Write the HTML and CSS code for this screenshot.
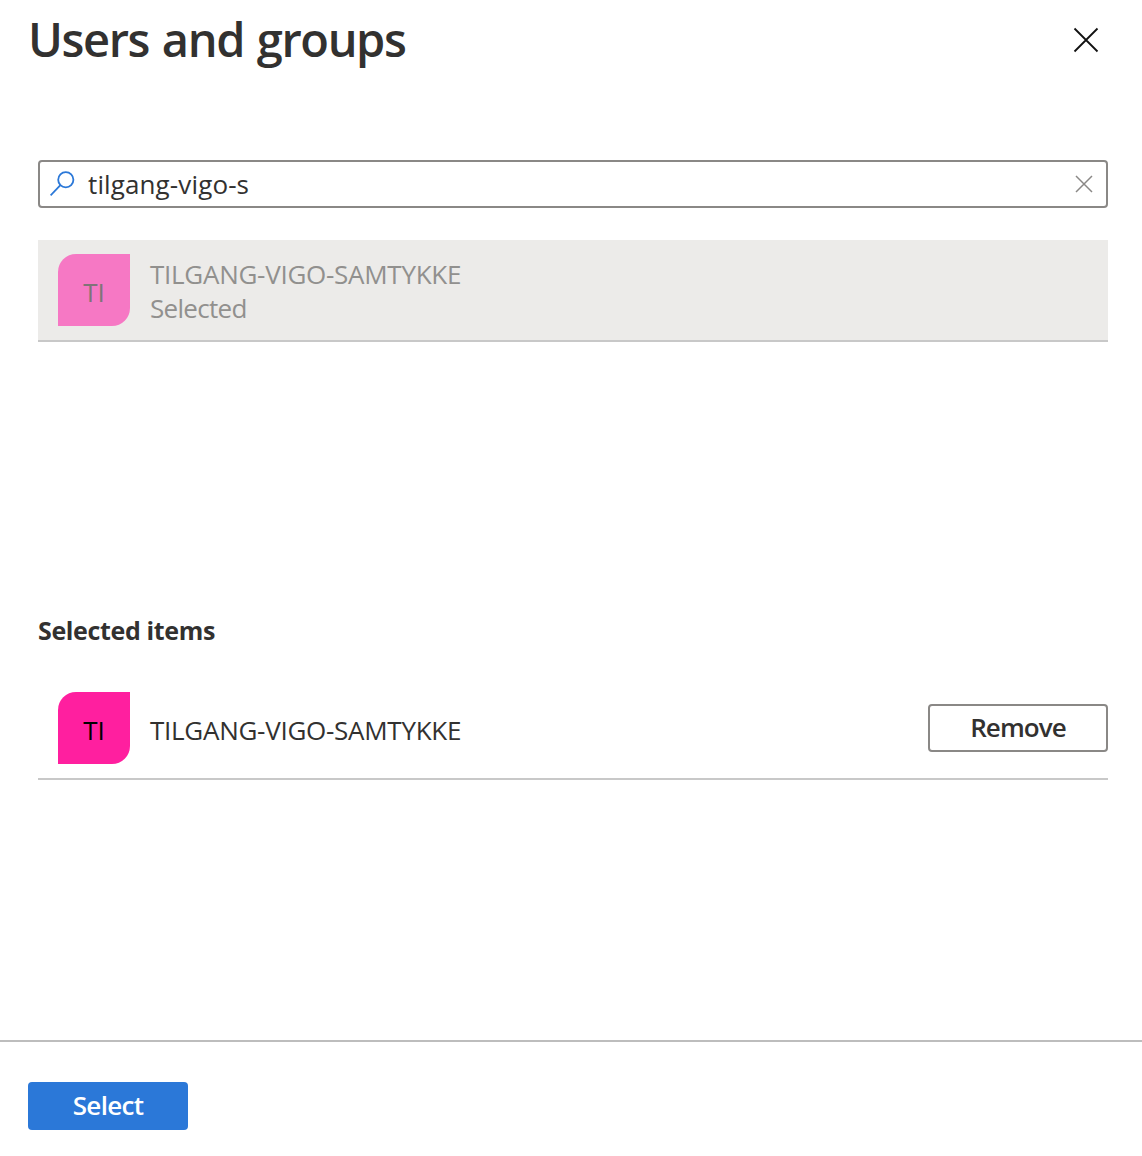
FILE: index.html
```html
<!DOCTYPE html>
<html lang="en">
<head>
<meta charset="utf-8">
<title>Users and groups</title>
<link rel="stylesheet" href="styles.css">
</head>
<body>
<main class="panel">
  <header class="header">
    <h1 class="title">Users and groups</h1>
    <button class="close" aria-label="Close"><svg width="26" height="26" viewBox="0 0 26 26"><path d="M1.5 1.5l23 23M24.5 1.5l-23 23"/></svg></button>
  </header>
  <div class="search">
    <svg class="lens" width="26" height="26" viewBox="0 0 26 26"><circle cx="15.8" cy="8.8" r="7.6"/><path d="M10.4 14.2L0.6 24.4"/></svg>
    <span class="query">tilgang-vigo-s</span>
    <svg class="clear" width="18" height="18" viewBox="0 0 18 18"><path d="M1 1l16 16M17 1L1 17"/></svg>
  </div>
  <div class="row result">
    <div class="avatar"><span>TI</span></div>
    <div class="info"><span class="name">TILGANG-VIGO-SAMTYKKE</span><span class="state">Selected</span></div>
  </div>
  <h2 class="subtitle">Selected items</h2>
  <div class="row chosen">
    <div class="avatar"><span>TI</span></div>
    <span class="name">TILGANG-VIGO-SAMTYKKE</span>
    <button class="remove">Remove</button>
  </div>
  <footer class="footer"><button class="select">Select</button></footer>
</main>
</body>
</html>
```
FILE: styles.css
```css
* { box-sizing: border-box; }
body { margin: 0; background: #fff; color: #323130; font: 26px/34px "Open Sans", "Noto Sans", sans-serif; }
button { font: inherit; padding: 0; margin: 0; color: inherit; }
svg { display: block; fill: none; flex: none; }
span { white-space: nowrap; }
.panel { height: 1156px; display: flex; flex-direction: column; }
.header { height: 80px; padding: 0 43px 0 28px; display: flex; justify-content: space-between; align-items: center; }
.title { margin: 0; font-size: 47px; font-weight: 650; line-height: 78px; height: 80px; letter-spacing: -1.4px; word-spacing: 2px; }
.close { border: 0; background: none; }
.close svg { stroke: #111; stroke-width: 1.8; }
.search { height: 48px; margin: 80px 34px 0 38px; border: 2px solid #8a8886; border-radius: 4px; display: flex; align-items: center; padding: 0 13px 0 10px; }
.lens { stroke: #2b78d8; stroke-width: 1.8; }
.query { margin-left: 12px; flex: 1; letter-spacing: 0.12px; }
.clear { stroke: #8a8886; stroke-width: 1.5; }
.row { margin: 0 34px 0 38px; display: flex; align-items: center; padding-left: 20px; height: 102px; border-bottom: 2px solid #c8c8c8; }
.result { margin-top: 32px; background: #ecebe9; color: #91908e; }
.avatar { width: 72px; height: 72px; margin-right: 20px; background: #ff1f9f; border-radius: 18px 0; display: flex; align-items: center; justify-content: center; color: #000; padding-top: 3px; }
.result .avatar { background: #f678c4; color: #7f7478; }
.info { display: flex; flex-direction: column; padding-top: 2px; }
.name { letter-spacing: -0.27px; }
.state { letter-spacing: -0.7px; }
.subtitle { margin: 271px 38px 0; height: 65px; font-size: 25px; line-height: 34px; font-weight: 700; letter-spacing: -0.35px; }
.chosen .name { flex: 1; padding-top: 4px; }
.remove { width: 180px; height: 48px; padding-bottom: 3px; border: 2px solid #8a8886; border-radius: 4px; background: #fff; font-weight: 620; letter-spacing: -0.9px; }
.footer { margin-top: auto; height: 116px; border-top: 2px solid #bdbdbd; padding: 40px 28px; }
.select { width: 160px; height: 48px; padding-bottom: 3px; border: 0; border-radius: 4px; background: #2b78d8; color: #fff; font-weight: 620; letter-spacing: -0.7px; }
```
